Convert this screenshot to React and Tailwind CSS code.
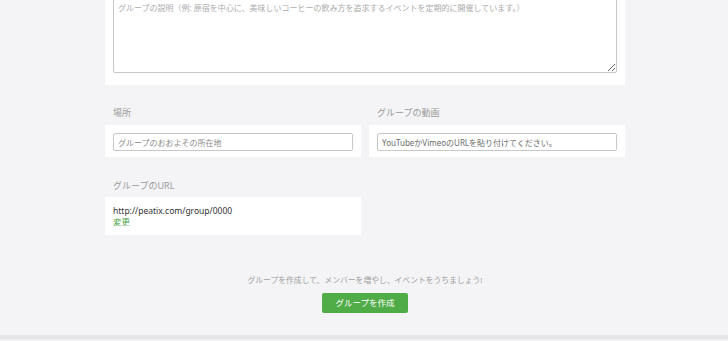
export default function App() {
  const font = { fontFamily: '"Noto Sans", "Noto Sans CJK JP", sans-serif' };
  return (
    <div className="h-[341px] w-full overflow-hidden bg-[#f4f4f7] flex flex-col" style={font}>
      <div className="pl-[2px] flex flex-col">
        <div className="w-[520px] mx-auto flex flex-col">
          <div className="bg-white px-2 pb-3 -mt-[3px]">
            <textarea
              className="block w-full h-[76px] border border-[#c8c8c8] rounded-[2px] px-[4px] py-[4px] text-[8px] leading-[11px] text-[#333] placeholder:text-[#ababab] outline-none"
              placeholder="グループの説明（例: 原宿を中心に、美味しいコーヒーの飲み方を追求するイベントを定期的に開催しています。）"
            />
          </div>

          <div className="grid grid-cols-2 gap-2 mt-[22px]">
            <div className="flex flex-col">
              <div className="text-[9px] leading-[12px] text-[#9a9a9a] px-2 mb-[6px]">場所</div>
              <div className="bg-white px-2 pt-2 pb-[6px]">
                <input
                  className="block w-full h-[18px] border border-[#c8c8c8] rounded-[2px] px-[4px] text-[8px] placeholder:text-[#8a8a8a] outline-none"
                  placeholder="グループのおおよその所在地"
                />
              </div>
            </div>
            <div className="flex flex-col">
              <div className="text-[9px] leading-[12px] text-[#9a9a9a] px-2 mb-[6px]">グループの動画</div>
              <div className="bg-white px-2 pt-2 pb-[6px]">
                <input
                  className="block w-full h-[18px] border border-[#c8c8c8] rounded-[2px] px-[4px] text-[8px] placeholder:text-[#6a6a6a] outline-none"
                  placeholder="YouTubeかVimeoのURLを貼り付けてください。"
                />
              </div>
            </div>
          </div>

          <div className="grid grid-cols-2 gap-2 mt-[23px]">
            <div className="flex flex-col">
              <div className="text-[9px] leading-[12px] text-[#9a9a9a] px-2 mb-[5px]">グループのURL</div>
              <div className="bg-white px-2 pt-2 pb-2 text-[8.5px] leading-[11px]">
                <div className="text-[#333]">http://peatix.com/group/0000</div>
                <div className="text-[#4aa64a]">変更</div>
              </div>
            </div>
            <div />
          </div>

          <div className="mt-[39px] text-center text-[7.8px] leading-[12px] text-[#a0a0a0]">
            グループを作成して、メンバーを増やし、イベントをうちましょう!
          </div>
          <div className="flex justify-center mt-[7px]">
            <button className="h-[20px] w-[86px] rounded-[2px] bg-[#4fac47] text-white text-[8.5px] flex items-center justify-center">
              グループを作成
            </button>
          </div>
        </div>
      </div>
      <div className="mt-[22px] h-[4px] bg-[#e6e6ea] shrink-0" />
      <div className="flex-1 bg-[#f0f0f3]" />
    </div>
  );
}
